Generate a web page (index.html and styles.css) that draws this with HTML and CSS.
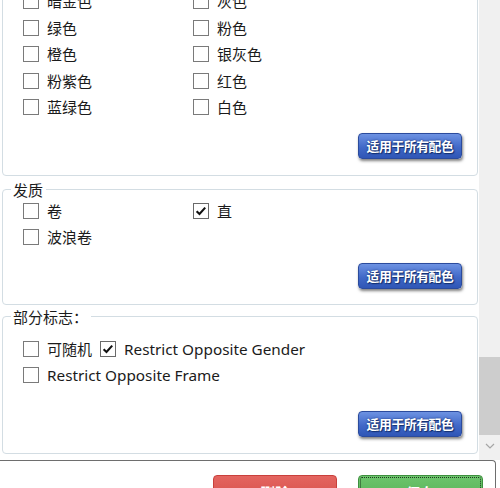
FILE: index.html
```html
<!DOCTYPE html>
<html lang="zh-CN">
<head>
<meta charset="utf-8">
<link rel="stylesheet" href="styles.css">
</head>
<body>
<div class="window">
  <div class="scroll-wrap">
    <div class="scroll-area">
      <div class="content">
        <fieldset class="group group-color">
          <div class="grid">
            <label class="opt"><span class="box"></span><span>暗金色</span></label>
            <label class="opt"><span class="box"></span><span>灰色</span></label>
            <label class="opt"><span class="box"></span><span>绿色</span></label>
            <label class="opt"><span class="box"></span><span>粉色</span></label>
            <label class="opt"><span class="box"></span><span>橙色</span></label>
            <label class="opt"><span class="box"></span><span>银灰色</span></label>
            <label class="opt"><span class="box"></span><span>粉紫色</span></label>
            <label class="opt"><span class="box"></span><span>红色</span></label>
            <label class="opt"><span class="box"></span><span>蓝绿色</span></label>
            <label class="opt"><span class="box"></span><span>白色</span></label>
          </div>
          <div class="actions"><button class="apply">适用于所有配色</button></div>
        </fieldset>

        <fieldset class="group group-hair">
          <legend>发质</legend>
          <div class="grid">
            <label class="opt"><span class="box"></span><span>卷</span></label>
            <label class="opt"><span class="box checked"><svg viewBox="0 0 16 16" width="14" height="14"><path d="M3 8.2 L6.3 11.5 L12.8 4.2" fill="none" stroke="#111" stroke-width="2.4"/></svg></span><span>直</span></label>
            <label class="opt"><span class="box"></span><span>波浪卷</span></label>
          </div>
          <div class="actions"><button class="apply">适用于所有配色</button></div>
        </fieldset>

        <fieldset class="group group-flags">
          <legend>部分标志：</legend>
          <div class="flags">
            <div class="flag-row">
              <label class="opt"><span class="box"></span><span>可随机</span></label>
              <label class="opt"><span class="box checked"><svg viewBox="0 0 16 16" width="14" height="14"><path d="M3 8.2 L6.3 11.5 L12.8 4.2" fill="none" stroke="#111" stroke-width="2.4"/></svg></span><span class="en">Restrict Opposite Gender</span></label>
            </div>
            <div class="flag-row">
              <label class="opt"><span class="box"></span><span class="en">Restrict Opposite Frame</span></label>
            </div>
          </div>
          <div class="actions flags-actions"><button class="apply">适用于所有配色</button></div>
        </fieldset>
      </div>
    </div>
    <div class="scrollbar">
      <div class="track"></div>
      <div class="thumb"></div>
      <div class="arrow"><svg viewBox="0 0 10 6" width="10" height="6"><path d="M1 1 L5 5 L9 1" fill="none" stroke="#a6a6a6" stroke-width="1.2"/></svg></div>
    </div>
  </div>
  <div class="footer">
    <button class="btn btn-danger">删除</button>
    <button class="btn btn-success">保存</button>
  </div>
</div>
</body>
</html>
```
FILE: styles.css
```css
html, body {
  margin: 0;
  padding: 0;
  background: #fff;
}
body {
  font-family: "Noto Sans", "Noto Sans CJK SC", sans-serif;
  font-size: 15px;
  color: #1b1b1b;
}
.window {
  width: 500px;
  height: 488px;
  overflow: hidden;
  display: flex;
  flex-direction: column;
}
.scroll-wrap {
  height: 460px;
  display: flex;
  flex: none;
}
.scroll-area {
  flex: 1;
  overflow: hidden;
}
.content {
  margin-top: -20px;
}
.group {
  margin: 0 1px 0 2px;
  border: 1px solid #d3dde3;
  border-radius: 4px;
  padding: 7px 15px 16px 20px;
  min-width: 0;
}
.group legend {
  font-family: "Noto Sans CJK SC", sans-serif;
  line-height: 16px;
  padding: 0 3px 0 2px;
  margin-left: -12px;
}
.group-hair {
  margin-top: 6px;
  padding-top: 0;
  padding-bottom: 15px;
}
.group-flags {
  margin-top: 4px;
  padding-top: 11px;
  padding-bottom: 16px;
}
.grid {
  display: grid;
  grid-template-columns: 170px 1fr;
  grid-auto-rows: 26.5px;
}
.opt {
  display: flex;
  align-items: center;
  gap: 8px;
  height: 26.5px;
  white-space: nowrap;
  font-family: "Noto Sans CJK SC", sans-serif;
  line-height: 20px;
}
.opt .en {
  font-family: "Noto Sans", sans-serif;
  font-size: 15.3px;
}
.box {
  width: 16px;
  height: 16px;
  box-sizing: border-box;
  border: 1px solid #7a7a7a;
  background: #fff;
  flex: none;
  display: flex;
  align-items: center;
  justify-content: center;
}
.box.checked {
  border-color: #6a6a6a;
}
.flag-row {
  display: flex;
  gap: 8px;
}
.actions {
  display: flex;
  justify-content: flex-end;
  margin-top: 11px;
}
.group-color .actions {
  margin-top: 12px;
}
.group-hair .actions {
  margin-top: 12px;
}
.flags-actions {
  margin-top: 22px;
}
.apply {
  width: 104px;
  height: 26px;
  border: 1px solid #2b4b9d;
  border-radius: 4px;
  background: linear-gradient(#6d92e2, #4169c8 55%, #2f56b6);
  box-shadow: 1px 2px 3px rgba(0, 0, 0, 0.5);
  color: #fff;
  font-family: "Noto Sans CJK SC", sans-serif;
  font-weight: bold;
  font-size: 12.8px;
  letter-spacing: -0.4px;
  text-shadow: 0 0 2px #102a6c, 1px 1px 1px #14306e;
  padding: 0;
  line-height: 24px;
}
.scrollbar {
  width: 21px;
  flex: none;
  background: #f0f0f0;
  display: flex;
  flex-direction: column;
}
.track {
  flex: 1;
}
.thumb {
  height: 78px;
  background: #cdcdcd;
}
.arrow {
  height: 21px;
  margin-bottom: 4px;
  display: flex;
  align-items: center;
  justify-content: center;
}
.footer {
  flex: 1;
  margin-left: -1px;
  width: 497px;
  box-sizing: border-box;
  border: 1px solid #6e6e6e;
  border-bottom: none;
  border-radius: 0 4px 0 0;
  display: flex;
  justify-content: flex-end;
  align-items: flex-start;
  gap: 21px;
  padding: 14px 12px 0 0;
}
.btn {
  height: 34px;
  border-radius: 4px;
  color: #fff;
  font-family: "Noto Sans CJK SC", sans-serif;
  font-weight: bold;
  font-size: 15px;
  padding: 0;
}
.btn-danger {
  width: 124px;
  border: 1px solid #c9403c;
  background: linear-gradient(#e46560, #d24a45);
}
.btn-success {
  width: 125px;
  border: 1px solid #3f8f3f;
  background: linear-gradient(#6cc46c, #52ad52);
  outline: 1px dotted #1d3a1d;
  outline-offset: -3px;
}
```
